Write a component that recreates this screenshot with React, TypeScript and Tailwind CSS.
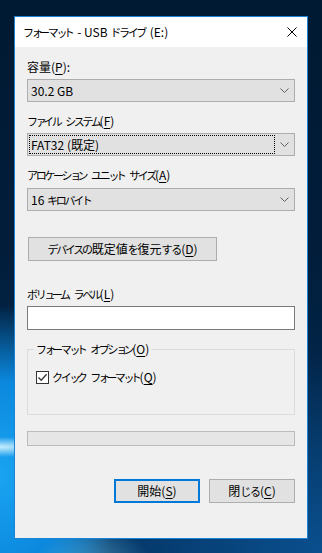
import React from "react";

const SMALL = "ァィゥェォッャュョヮ";

function J({ s }: { s: string }) {
  const parts = s.split(/([\u30A0-\u30FF]+|[\u3040-\u309F]+)/);
  return (
    <>
      {parts.map((p, i) => {
        if (/^[\u30A0-\u30FF]+$/.test(p)) {
          return (
            <span key={i} className="text-[11px] tracking-[-2.3px]">
              {Array.from(p).map((ch, j) =>
                SMALL.includes(ch) ? (
                  <span key={j} className="tracking-[-3.7px]">
                    {ch}
                  </span>
                ) : (
                  ch
                )
              )}
            </span>
          );
        }
        if (/^[\u3040-\u309F]+$/.test(p)) {
          return (
            <span key={i} className="text-[11px] tracking-[-1.2px]">
              {p}
            </span>
          );
        }
        if (p.startsWith(" ") && i > 0) {
          return (
            <span key={i} className="ml-[2px]">
              {p}
            </span>
          );
        }
        return p;
      })}
    </>
  );
}

function U({ children }: { children: React.ReactNode }) {
  return <span className="underline underline-offset-[2px] decoration-[1px]">{children}</span>;
}

function Chevron() {
  return (
    <svg width="9" height="5" viewBox="0 0 9 5" className="block">
      <path d="M0.5 0.5 L4.5 4.5 L8.5 0.5" fill="none" stroke="#606060" strokeWidth="1" />
    </svg>
  );
}

function Combo({ value, focused }: { value: string; focused?: boolean }) {
  return (
    <div className="flex h-[23px] w-full border border-[#adadad] bg-[#e1e1e1]">
      <div
        className={
          "ml-[1px] my-[1px] flex flex-1 items-center border pl-[1px] " +
          (focused ? "border-dotted border-black" : "border-transparent")
        }
      >
        <span className="leading-[16px] whitespace-nowrap">
          <J s={value} />
        </span>
      </div>
      <div className="flex w-[19px] items-center justify-center">
        <Chevron />
      </div>
    </div>
  );
}

function Label({ children }: { children: React.ReactNode }) {
  return <div className="h-[16px] leading-[16px] whitespace-nowrap">{children}</div>;
}

export default function App() {
  return (
    <div className="relative h-[553px] w-[322px] overflow-hidden pl-[14px] pt-[16px] text-[12px] text-black font-['Noto_Sans_CJK_JP','Noto_Sans',sans-serif] [background-image:radial-gradient(70px_10px_at_0px_447px,rgba(215,245,255,0.9),transparent),radial-gradient(120px_170px_at_0px_475px,#1aa4f2_0%,#0b88dd_55%,transparent_100%),radial-gradient(140px_50px_at_10px_560px,#7fd8fa,transparent),radial-gradient(260px_200px_at_322px_553px,#0a4f8e,transparent),linear-gradient(to_bottom,#011a33_0%,#011d3a_45%,#03325f_100%)]">
      <div className="flex h-[523px] w-[294px] flex-col border border-[#1883d7] bg-[#f0f0f0]">
        {/* title bar */}
        <div className="flex h-[30px] items-center justify-between bg-white pl-[8px] pr-[10px]">
          <span className="leading-[16px] whitespace-nowrap">
            <J s="フォーマット - USB ドライブ (E:)" />
          </span>
          <svg width="10" height="10" viewBox="0 0 10 10" className="block">
            <path d="M0.5 0.5 L9.5 9.5 M9.5 0.5 L0.5 9.5" stroke="#000" strokeWidth="1" fill="none" />
          </svg>
        </div>

        {/* content */}
        <div className="flex flex-col px-[12px] pt-[12px]">
          <Label>
            容量(<U>P</U>):
          </Label>
          <div className="mt-[4px]">
            <Combo value="30.2 GB" />
          </div>

          <div className="mt-[11px]">
            <Label>
              <J s="ファイル システム(" />
              <U>F</U>)
            </Label>
          </div>
          <div className="mt-[4px]">
            <Combo value="FAT32 (既定)" focused />
          </div>

          <div className="mt-[11px]">
            <Label>
              <J s="アロケーション ユニット サイズ(" />
              <U>A</U>)
            </Label>
          </div>
          <div className="mt-[5px]">
            <Combo value="16 キロバイト" />
          </div>

          <div className="mt-[26px] ml-[1px] flex h-[24px] w-[189px] items-center justify-center border border-[#adadad] bg-[#e1e1e1]">
            <span className="leading-[16px] whitespace-nowrap">
              <J s="デバイスの既定値を復元する(" />
              <U>D</U>)
            </span>
          </div>

          <div className="mt-[25px]">
            <Label>
              <J s="ボリューム ラベル(" />
              <U>L</U>)
            </Label>
          </div>
          <div className="mt-[4px] h-[24px] w-full border border-[#7a7a7a] bg-white" />

          {/* group box */}
          <div className="relative mt-[19px] h-[66px] w-full border border-[#dcdcdc] pl-[8px] pt-[19px]">
            <span className="absolute left-[6px] top-[-9px] whitespace-nowrap bg-[#f0f0f0] px-[2px] leading-[16px]">
              <J s="フォーマット オプション(" />
              <U>O</U>)
            </span>
            <div className="flex items-center">
              <span className="flex h-[13px] w-[13px] items-center justify-center border border-[#333333] bg-white">
                <svg width="11" height="11" viewBox="0 0 11 11" className="block">
                  <path d="M1.5 5.5 L4.2 8.3 L9.6 2.2" fill="none" stroke="#333333" strokeWidth="1.3" />
                </svg>
              </span>
              <span className="ml-[3px] whitespace-nowrap leading-[16px]">
                <J s="クイック フォーマット(" />
                <U>Q</U>)
              </span>
            </div>
          </div>

          <div className="mt-[16px] h-[15px] w-full border border-[#bcbcbc] bg-[#e6e6e6]" />

          <div className="mt-[33px] flex justify-end gap-[9px]">
            <div className="flex h-[24px] w-[86px] items-center justify-center border-2 border-[#0078d7] bg-[#e1e1e1]">
              <span className="leading-[16px]">
                開始(<U>S</U>)
              </span>
            </div>
            <div className="flex h-[24px] w-[86px] items-center justify-center border border-[#adadad] bg-[#e1e1e1]">
              <span className="leading-[16px] whitespace-nowrap">
                <J s="閉じる(" />
                <U>C</U>)
              </span>
            </div>
          </div>
        </div>
      </div>
    </div>
  );
}
